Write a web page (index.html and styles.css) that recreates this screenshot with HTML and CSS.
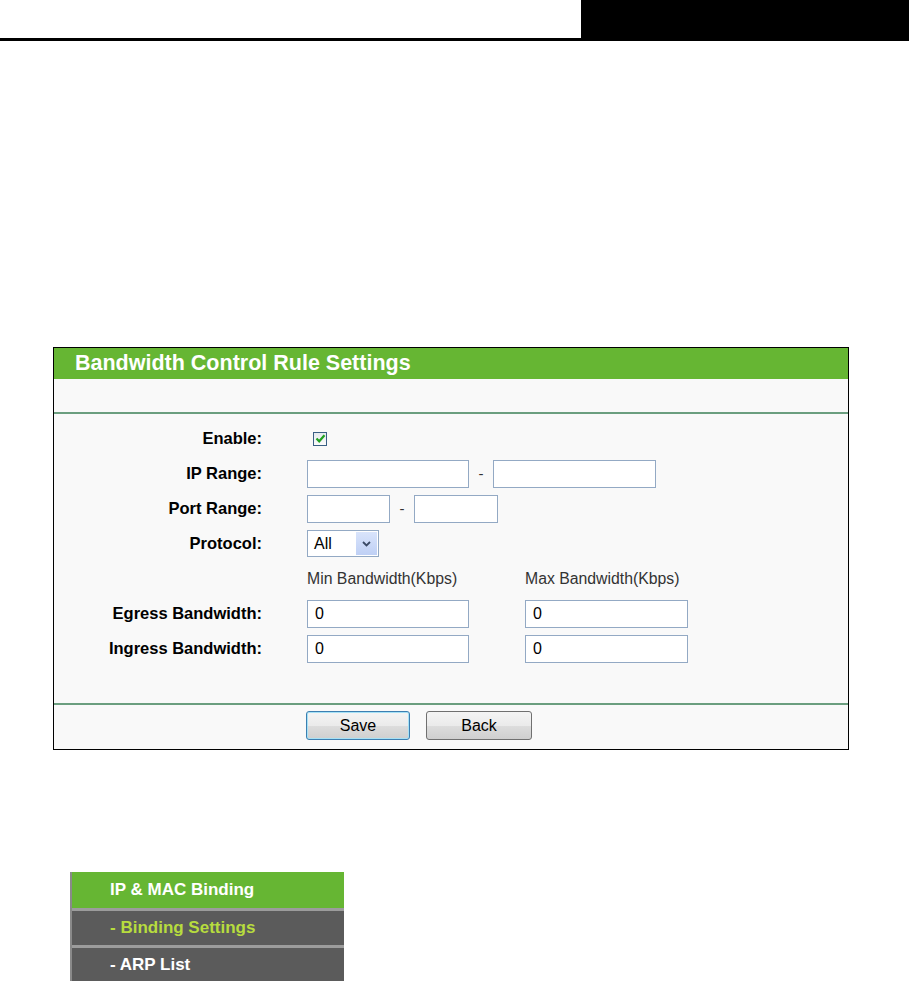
FILE: index.html
```html
<!DOCTYPE html>
<html lang="en">
<head>
  <meta charset="UTF-8" />
  <title>Bandwidth Control Rule Settings</title>
  <link rel="stylesheet" href="styles.css">
</head>
<body>
  <!-- Page header -->
  <div class="page-head">
    <div class="head-blank"></div>
    <div class="head-block"></div>
  </div>

  <!-- Rule settings panel -->
  <div class="panel">
    <div class="panel-title">Bandwidth Control Rule Settings</div>
    <div class="panel-spacer"></div>

    <div class="form">
      <div class="row">
        <div class="label">Enable:</div>
        <div class="field">
          <span class="check">
            <svg width="11" height="11" viewBox="0 0 11 11"><path d="M1.5 5.5 L4.2 8.3 L9.5 2.2" fill="none" stroke="#21a121" stroke-width="2.2"/></svg>
          </span>
        </div>
      </div>
      <div class="row">
        <div class="label">IP Range:</div>
        <div class="field">
          <input class="text w162" type="text">
          <span class="dash">-</span>
          <input class="text w163" type="text">
        </div>
      </div>
      <div class="row">
        <div class="label">Port Range:</div>
        <div class="field">
          <input class="text w83" type="text">
          <span class="dash">-</span>
          <input class="text w84" type="text">
        </div>
      </div>
      <div class="row">
        <div class="label">Protocol:</div>
        <div class="field">
          <div class="select">
            <span class="select-value">All</span>
            <span class="select-btn">
              <svg width="9" height="6" viewBox="0 0 9 6"><path d="M1 1 L4.5 4.5 L8 1" fill="none" stroke="#3b4a66" stroke-width="1.8"/></svg>
            </span>
          </div>
        </div>
      </div>
      <div class="row">
        <div class="label"></div>
        <div class="field">
          <span class="col-head">Min Bandwidth(Kbps)</span>
          <span class="col-head">Max Bandwidth(Kbps)</span>
        </div>
      </div>
      <div class="row">
        <div class="label">Egress Bandwidth:</div>
        <div class="field bw">
          <input class="text w162" type="text" value="0">
          <input class="text w163" type="text" value="0">
        </div>
      </div>
      <div class="row">
        <div class="label">Ingress Bandwidth:</div>
        <div class="field bw">
          <input class="text w162" type="text" value="0">
          <input class="text w163" type="text" value="0">
        </div>
      </div>
    </div>

    <div class="actions">
      <button class="btn btn-default">Save</button>
      <button class="btn">Back</button>
    </div>
  </div>

  <!-- Menu -->
  <div class="menu">
    <div class="menu-item menu-top">IP &amp; MAC Binding</div>
    <div class="menu-item menu-current">- Binding Settings</div>
    <div class="menu-item">- ARP List</div>
  </div>
</body>
</html>
```

FILE: styles.css
```css
body {
  margin: 0;
  background: #fff;
  font-family: "Liberation Sans", Arial, sans-serif;
  color: #000;
}

.page-head {
  display: flex;
  height: 38px;
  border-bottom: 3px solid #000;
}

.head-blank {
  flex: 1;
}

.head-block {
  width: 328px;
  background: #000;
}

.panel {
  margin: 306px 0 0 53px;
  width: 794px;
  border: 1px solid #000;
  background: #f9f9f9;
}

.panel-title {
  height: 31px;
  line-height: 31px;
  background: #66b633;
  color: #fff;
  font-size: 21.5px;
  font-weight: bold;
  padding-left: 21px;
}

.panel-spacer {
  height: 33px;
  border-bottom: 2px solid #6b9e7f;
}

.form {
  padding: 7px 0 37px;
  border-bottom: 2px solid #6b9e7f;
}

.row {
  display: flex;
  align-items: center;
  height: 35px;
}

.label {
  width: 208px;
  text-align: right;
  font-size: 16.5px;
  font-weight: bold;
  padding-right: 45px;
}

.field {
  display: flex;
  align-items: center;
}

.text {
  box-sizing: border-box;
  height: 28px;
  border: 1px solid #93a9c4;
  background: #fff;
  font-family: inherit;
  font-size: 16px;
  padding: 0 7px;
  margin: 0;
  color: #000;
}

.w162 { width: 162px; }
.w163 { width: 163px; }
.w83 { width: 83px; }
.w84 { width: 84px; }

.dash {
  width: 24px;
  text-align: center;
  font-size: 15px;
  color: #333;
}

.bw .text + .text {
  margin-left: 56px;
}

.check {
  box-sizing: border-box;
  width: 14px;
  height: 14px;
  margin-left: 6px;
  border: 1px solid #3a5f84;
  background: linear-gradient(#e4e9ee, #fbfbfb);
  display: flex;
  align-items: center;
  justify-content: center;
}

.select {
  box-sizing: border-box;
  width: 72px;
  height: 27px;
  border: 1px solid #93a9c4;
  background: #fff;
  display: flex;
  align-items: center;
  justify-content: space-between;
  padding: 1px;
}

.select-value {
  font-size: 16px;
  padding-left: 5px;
}

.select-btn {
  width: 21px;
  height: 23px;
  background: linear-gradient(#d9e4fb, #bfd0f5);
  display: flex;
  align-items: center;
  justify-content: center;
}

.col-head {
  font-size: 15.8px;
  color: #333;
  width: 218px;
}

.actions {
  display: flex;
  padding: 6px 0 9px 252px;
  gap: 16px;
}

.btn {
  height: 29px;
  width: 106px;
  font-family: inherit;
  font-size: 16px;
  color: #000;
  border: 1px solid #707070;
  border-radius: 3px;
  background: linear-gradient(#f4f4f4 0%, #ebebeb 50%, #dddddd 51%, #cfcfcf 100%);
  padding: 0;
}

.btn-default {
  width: 104px;
  border-color: #3c7fb1;
  box-shadow: inset 0 0 0 1px #a6e1f6;
}

.menu {
  margin: 122px 0 0 70px;
  width: 272px;
  border-left: 2px solid #8a8a8a;
}

.menu-item {
  height: 34px;
  line-height: 34px;
  padding-left: 38px;
  background: #5b5b5b;
  color: #fff;
  font-size: 17px;
  font-weight: bold;
  border-top: 3px solid #9c9c9c;
}

.menu-top {
  height: 36px;
  line-height: 36px;
  background: #66b633;
  border-top: 0;
}

.menu-current {
  color: #b7dc3e;
}
```
